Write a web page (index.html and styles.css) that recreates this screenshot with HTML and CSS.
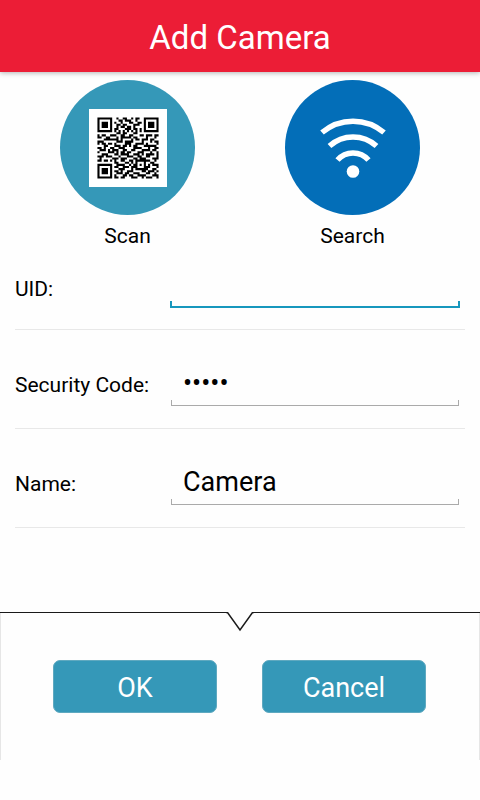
FILE: index.html
```html
<!DOCTYPE html>
<html lang="en">
<head>
  <meta charset="utf-8"/>
  <meta name="viewport" content="width=device-width, initial-scale=1">
  <title>Add Camera</title>
  <link rel="stylesheet" href="styles.css">
</head>
<body>
  <header class="header">
    <h1>Add Camera</h1>
  </header>

  <div class="actions">
    <button type="button" class="action">
      <span class="circle circle-scan">
        <svg class="qr" viewBox="-4 -4 37 37" aria-hidden="true">
          <rect x="-4" y="-4" width="37" height="37" fill="#fff"/>
          <path id="qrModules" fill="#000"/>
        </svg>
      </span>
      <span>Scan</span>
    </button>
    <button type="button" class="action">
      <span class="circle circle-search">
        <svg class="wifi" viewBox="0 0 66 60" aria-hidden="true">
          <g fill="none" stroke="#fff" stroke-width="5.500">
            <path d="M2 14.500A48 48 0 0 1 64 14.500"/>
            <path d="M9.500 28A35 35 0 0 1 56.500 28"/>
            <path d="M17.500 42A20.500 20.500 0 0 1 48.500 42"/>
          </g>
          <circle cx="33" cy="53.500" r="6.300" fill="#fff"/>
        </svg>
      </span>
      <span>Search</span>
    </button>
  </div>

  <form id="cameraForm" class="form">
    <div class="row">
      <label for="uid">UID:</label>
      <input type="text" id="uid" class="active">
    </div>
    <div class="row">
      <label for="code">Security Code:</label>
      <input type="password" id="code" value="admin">
    </div>
    <div class="row">
      <label for="name">Name:</label>
      <input type="text" id="name" value="Camera">
    </div>
  </form>

  <div class="footer">
    <div class="notch">
      <span class="line"></span>
      <svg width="28" height="20" viewBox="0 0 28 20" aria-hidden="true">
        <path d="M0 .5H1.500L14 18L26.500 .5H28" fill="none" stroke="#1a1a1a" stroke-width="1.500"/>
      </svg>
      <span class="line"></span>
    </div>
    <div class="buttons">
      <button type="submit" form="cameraForm" class="btn">OK</button>
      <button type="button" class="btn">Cancel</button>
    </div>
  </div>

  <script src="qr.js"></script>
</body>
</html>
```

FILE: styles.css
```css
* {
  box-sizing: border-box;
}
body {
  margin: 0;
  font-family: Roboto, sans-serif;
  font-size: 21px;
  background: #fefefe;
  color: #000;
}
button, input {
  font-family: inherit;
  color: inherit;
}
.header {
  height: 72px;
  background: #ec1d36;
  color: #fff;
  text-align: center;
  box-shadow: 0 1px 5px rgba(0, 0, 0, 0.3);
}
.header h1 {
  margin: 0;
  font-size: 33px;
  font-weight: 400;
  line-height: 76px;
}
.actions {
  display: flex;
  padding: 8px 15px 0;
}
.action {
  flex: 1;
  display: flex;
  flex-direction: column;
  align-items: center;
  gap: 8px;
  padding: 0;
  border: 0;
  background: none;
  font-size: 21px;
  line-height: 26px;
}
.circle {
  display: flex;
  align-items: center;
  justify-content: center;
  width: 135px;
  height: 135px;
  border-radius: 50%;
}
.circle-scan { background: #3598b8; }
.circle-search { background: #036eb8; }
.qr {
  width: 78px;
  height: 78px;
}
.wifi {
  width: 66px;
  height: 60px;
}
.form {
  padding: 0 15px;
}
.row {
  display: flex;
  align-items: flex-end;
  height: 99px;
  padding: 0 5px 22px 0;
  border-bottom: 1px solid #e8e8e8;
}
.row label {
  width: 155px;
  padding-bottom: 8px;
  line-height: 26px;
}
.row:first-child {
  height: 81px;
  padding-bottom: 21px;
}
.row:first-child label {
  padding-bottom: 6px;
}
.row input {
  --line: #aaa;
  flex: 1;
  min-width: 0;
  height: 48px;
  margin: 0 1px;
  padding: 2px 12px 0;
  border: 0;
  outline: 0;
  font-size: 27px;
  /* underline with short ticks at both ends */
  background:
    linear-gradient(var(--line), var(--line)) left bottom / 1px 6px no-repeat,
    linear-gradient(var(--line), var(--line)) right bottom / 1px 6px no-repeat,
    linear-gradient(var(--line), var(--line)) left bottom / 100% 1px no-repeat;
}
.row input.active {
  --line: #1797bd;
  margin: 0;
  background-size: 2px 7px, 2px 7px, 100% 2px;
}
.footer {
  margin-top: 84px;
  border: solid #e6e6e6;
  border-width: 0 1px;
}
.notch {
  display: flex;
  margin: 0 -1px;
}
.notch .line {
  flex: 1;
  border-top: 1px solid #1a1a1a;
}
.buttons {
  display: flex;
  gap: 45px;
  height: 128px;
  padding: 28px 53px 0 52px;
}
.btn {
  flex: 1;
  height: 53px;
  padding: 2px 0 0;
  border: 1px solid #5fa9c0;
  border-radius: 7px;
  background: #3598b8;
  color: #fff;
  font-size: 27px;
}
```

FILE: qr.js
```js
const rows = [
  "11111110010011001011001111111",
  "10000010001101110010001000001",
  "10111010100100011001101011101",
  "10111010011011000111001011101",
  "10111010010110110100001011101",
  "10000010110001110110101000001",
  "11111110101010101010101111111",
  "00000000011011000110000000000",
  "10110011100110011000110111011",
  "11001100010111110110000100010",
  "00011111110100001011011101100",
  "11100000011101111000010001011",
  "10110110100001110011110100001",
  "00011000111011010110001111110",
  "11010011001110000111100010011",
  "01110101110011001100011110110",
  "10000111010110110001110001001",
  "00111000110111100111010111101",
  "11101110001000111001100110001",
  "01000001110111000110111000111",
  "11011010100110011011111110010",
  "00000000110001101010001001100",
  "11111110011110010110101010111",
  "10000010110011101110001110001",
  "10111010001110001011111100110",
  "10111010110100111000011011101",
  "10111010011101100111000110010",
  "10000010100011011001111000111",
  "11111110110110001110010111001"
];

let d = "";
rows.forEach((row, y) => {
  [...row].forEach((cell, x) => {
    if (cell === "1") d += `M${x} ${y}h1v1h-1z`;
  });
});
document.getElementById("qrModules").setAttribute("d", d);
```
